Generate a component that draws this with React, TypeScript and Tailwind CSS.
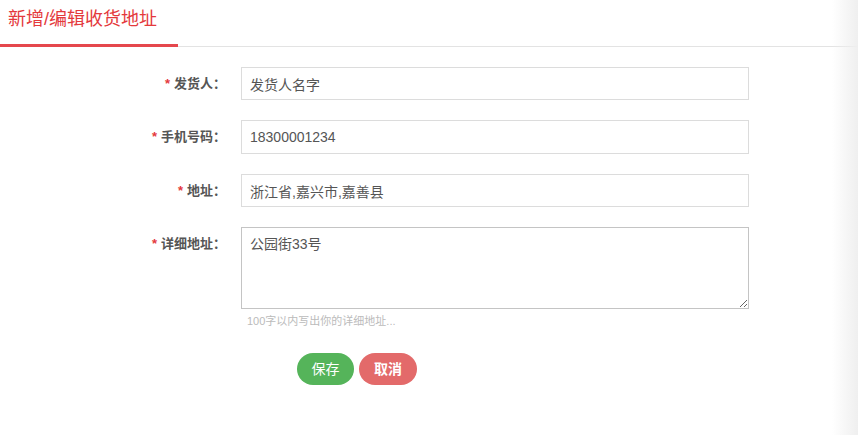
import React from 'react';

const font = { fontFamily: '"Helvetica Neue", "Liberation Sans", "Noto Sans CJK SC", sans-serif' };

function Label({ text }: { text: string }) {
  return (
    <div className="w-[226px] shrink-0 text-right text-[13px] font-bold text-[#555] leading-[33px]">
      <span className="text-[#e4393c] mr-1">*</span>
      {text}：
    </div>
  );
}

export default function App() {
  return (
    <div className="relative w-[858px] h-[435px] bg-white overflow-hidden" style={font}>
      <div className="h-[47px] border-b border-[#e3e3e3] flex">
        <div className="w-[178px] h-[47px] border-b-[3px] border-[#e5474d] pl-2 pt-[6px] text-[18px] text-[#e4393c] leading-[26px]">
          新增/编辑收货地址
        </div>
      </div>

      <div className="pt-[20px]">
        <div className="flex items-start gap-[15px] mb-[20px]">
          <Label text="发货人" />
          <input
            defaultValue="发货人名字"
            className="w-[508px] h-[33px] border border-[#dcdcdc] px-2 text-[14px] text-[#555] outline-none"
          />
        </div>
        <div className="flex items-start gap-[15px] mb-[20px]">
          <Label text="手机号码" />
          <input
            defaultValue="18300001234"
            className="w-[508px] h-[34px] border border-[#dcdcdc] px-2 text-[14px] text-[#555] outline-none"
          />
        </div>
        <div className="flex items-start gap-[15px] mb-[20px]">
          <Label text="地址" />
          <input
            defaultValue="浙江省,嘉兴市,嘉善县"
            className="w-[508px] h-[33px] border border-[#dcdcdc] px-2 text-[14px] text-[#555] outline-none"
          />
        </div>
        <div className="flex items-start gap-[15px]">
          <Label text="详细地址" />
          <div className="flex flex-col">
            <textarea
              defaultValue="公园街33号"
              className="w-[508px] h-[82px] border border-[#c4c4c4] px-2 py-[6px] text-[14px] text-[#555] outline-none resize"
            />
            <div className="pl-[6px] pt-[4px] text-[11px] text-[#bbb] leading-[16px]">100字以内写出你的详细地址...</div>
          </div>
        </div>

        <div className="flex gap-[5px] pl-[297px] pt-[24px]">
          <button className="w-[57px] h-[32px] rounded-full bg-[#55b45a] text-white text-[14px]">保存</button>
          <button className="w-[58px] h-[32px] rounded-full bg-[#e36a6a] text-white text-[14px] font-bold">取消</button>
        </div>
      </div>

      {/* soft shade along the right edge */}
      <div className="pointer-events-none absolute top-0 right-0 w-[26px] h-full bg-gradient-to-r from-white/0 to-[#efefef]" />
    </div>
  );
}
